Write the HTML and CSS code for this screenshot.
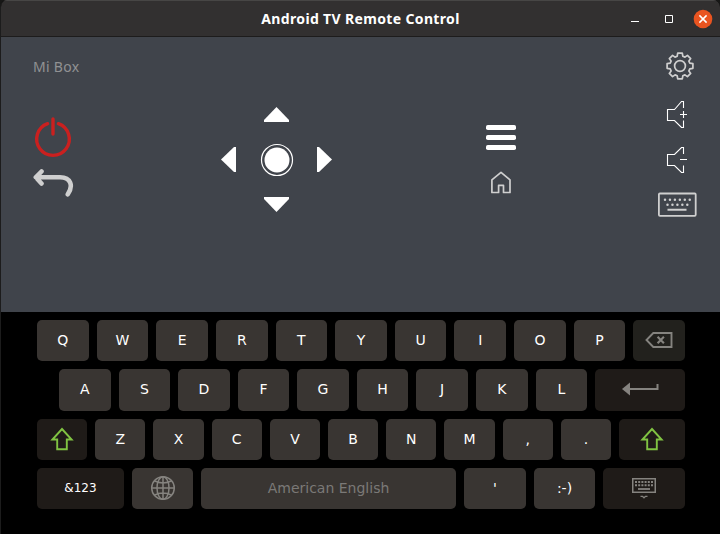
FILE: index.html
```
<!DOCTYPE html>
<html lang="en">
<head>
<meta charset="utf-8">
<title>Android TV Remote Control</title>
<link rel="stylesheet" href="styles.css">
</head>
<body>
<div class="window">
  <header class="titlebar">
    <h1 class="title">Android TV Remote Control</h1>
    <div class="controls">
      <svg width="10" height="10" viewBox="0 0 10 10"><path d="M1 7.5h8" stroke="#fff"/></svg>
      <svg width="10" height="10" viewBox="0 0 10 10"><path d="M1.5 1.5h7v7h-7z" fill="none" stroke="#fff"/></svg>
      <svg width="20" height="20" viewBox="0 0 20 20"><circle cx="10" cy="10" r="9.3" fill="#e95420"/><path d="M6.4 6.4l7.2 7.2M13.6 6.4l-7.2 7.2" stroke="#fff" stroke-width="1.5"/></svg>
    </div>
  </header>

  <main class="remote">
    <section class="col col-left">
      <span class="device">Mi Box</span>
      <svg class="power" width="40" height="42" viewBox="0 0 40 42" fill="none" stroke="#ca201f" stroke-width="3.4" stroke-linecap="round"><path d="M14.6 7.7a16.3 16.3 0 1 0 10.8 0M20 3v15"/></svg>
      <svg width="42" height="32" viewBox="0 0 42 32" fill="none" stroke="#cfcfcf" stroke-width="4.6" stroke-linecap="round" stroke-linejoin="round"><path d="M8.5 6.5L2.8 12.3L8.5 18.5M3 12.3H27C38 12.3 40.5 21 34.8 29.3"/></svg>
    </section>

    <section class="dpad">
      <svg class="up" width="25" height="15" viewBox="0 0 25 15"><path d="M12.5 0L25 13V15H0V13z" fill="#fff"/></svg>
      <svg class="left" width="15" height="25" viewBox="0 0 15 25"><path d="M0 12.5L13 0H15V25H13z" fill="#fff"/></svg>
      <svg class="ok" width="34" height="34" viewBox="0 0 34 34"><circle cx="17" cy="17" r="15.5" fill="none" stroke="#fff" stroke-width="1.2"/><circle cx="17" cy="17" r="12.5" fill="#fff"/></svg>
      <svg class="right" width="15" height="25" viewBox="0 0 15 25"><path d="M15 12.5L2 0H0V25H2z" fill="#fff"/></svg>
      <svg class="down" width="25" height="15" viewBox="0 0 25 15"><path d="M12.5 15L25 2V0H0V2z" fill="#fff"/></svg>
    </section>

    <section class="col col-menu">
      <svg width="30" height="25" viewBox="0 0 30 25" fill="#fff"><rect width="30" height="5" rx="1.8"/><rect y="10" width="30" height="5" rx="1.8"/><rect y="20" width="30" height="5" rx="1.8"/></svg>
      <svg width="22" height="23" viewBox="0 0 22 23" fill="none" stroke="#cfcfcf" stroke-width="1.7" stroke-linejoin="round"><path d="M1.9 8.8L11 1.3L20 8.8V21.5H13.5V14.4H8.6V21.5H1.9z"/></svg>
    </section>

    <section class="col col-right">
      <svg width="28" height="28" viewBox="-14 -14 28 28" class="gear" fill="none" stroke="#cfcfcf" stroke-width="1.7" stroke-linejoin="round"><path d="M-2.3-12.9H2.3L2.8-9.8L4.95-8.9L7.42-10.68L10.68-7.42L8.9-4.95L9.8-2.8L12.9-2.3V2.3L9.8 2.8L8.9 4.95L10.68 7.42L7.42 10.68L4.95 8.9L2.8 9.8L2.3 12.9H-2.3L-2.8 9.8L-4.95 8.9L-7.42 10.68L-10.68 7.42L-8.9 4.95L-9.8 2.8L-12.9 2.3V-2.3L-9.8-2.8L-8.9-4.95L-10.68-7.42L-7.42-10.68L-4.95-8.9L-2.8-9.8z"/><circle r="5.4"/></svg>
      <svg class="vol" width="22" height="28" viewBox="0 0 22 28" fill="none" stroke="#fff" stroke-width="1.1"><path d="M17.5 8V1.5H15.5L8.5 9.5H1.5V20.5H8.5L15.5 27.5H17.5V20.5M14 14.5H21M17.5 11V18"/></svg>
      <svg class="vol" width="22" height="28" viewBox="0 0 22 28" fill="none" stroke="#fff" stroke-width="1.1"><path d="M17.5 8V1.5H15.5L8.5 8.5H1.5V19.5H8.5L15.5 26.5H17.5V19.5M14 13.5H21"/></svg>
      <svg width="40" height="25" viewBox="0 0 40 25" fill="none" stroke="#cfcfcf"><rect x="1.9" y="1.5" width="36.8" height="22.3" rx="1" stroke-width="1.8"/><path d="M8 7.8h26M10.5 12.8h21.5" stroke-width="2.5" stroke-linecap="round" stroke-dasharray="0 4.95"/><path d="M10.5 17.8h19" stroke-width="2"/></svg>
    </section>
  </main>

  <section class="keyboard">
    <div class="row">
      <span class="key">Q</span><span class="key">W</span><span class="key">E</span><span class="key">R</span><span class="key">T</span><span class="key">Y</span><span class="key">U</span><span class="key">I</span><span class="key">O</span><span class="key">P</span>
      <span class="key olive"><svg width="28" height="16" viewBox="0 0 28 16" fill="none" stroke="#85837f"><path d="M8.3 1H26.5V15H8.3L1.5 8z" stroke-width="1.9"/><path d="M12.6 4.7l6.3 6.6M18.9 4.7l-6.3 6.6" stroke-width="2.1"/></svg></span>
    </div>
    <div class="row row-home">
      <span class="key">A</span><span class="key">S</span><span class="key">D</span><span class="key">F</span><span class="key">G</span><span class="key">H</span><span class="key">J</span><span class="key">K</span><span class="key">L</span>
      <span class="key dark enter"><svg width="38" height="14" viewBox="0 0 38 14"><path d="M1 7L9 .5V13.5z" fill="#85837f"/><path d="M8 7H36.5V2" fill="none" stroke="#85837f" stroke-width="2"/></svg></span>
    </div>
    <div class="row">
      <span class="key dark"><svg class="shift" width="24" height="24" viewBox="0 0 24 24"><path d="M12 2L21.6 12.5H16.8V22.2H7.2V12.5H2.4z"/></svg></span>
      <span class="key">Z</span><span class="key">X</span><span class="key">C</span><span class="key">V</span><span class="key">B</span><span class="key">N</span><span class="key">M</span><span class="key">,</span><span class="key">.</span>
      <span class="key dark shift-right"><svg class="shift" width="24" height="24" viewBox="0 0 24 24"><path d="M12 2L21.6 12.5H16.8V22.2H7.2V12.5H2.4z"/></svg></span>
    </div>
    <div class="row row-space">
      <span class="key dark small">&amp;123</span>
      <span class="key"><svg width="26" height="26" viewBox="0 0 26 26" fill="none" stroke="#85837f" stroke-width="1.5"><circle cx="13" cy="13" r="11.3"/><ellipse cx="13" cy="13" rx="6" ry="11.3"/><path d="M13 1.5V24.5M1.5 13H24.5M4.2 5.8Q13 10 21.8 5.8M4.2 20.2Q13 16 21.8 20.2"/></svg></span>
      <span class="key space">American English</span>
      <span class="key">'</span>
      <span class="key">:-)</span>
      <span class="key dark"><svg class="hide" width="24" height="22" viewBox="0 0 24 22" fill="none" stroke="#85837f"><rect x=".75" y=".75" width="22.5" height="13.5" stroke-width="1.5"/><path d="M3 4H21M3 7.2H21" stroke-width="2" stroke-dasharray="2 1.2"/><path d="M6 11H18" stroke-width="1.8"/><path d="M8.5 18.3H10.5L12 19.8L13.5 18.3H15.5" stroke-width="1.3"/></svg></span>
    </div>
  </section>
</div>
</body>
</html>
```
FILE: styles.css
```
* { box-sizing: border-box; }
body { margin: 0; background: #171716; }
svg { display: block; flex: none; }

.window {
  width: 720px;
  height: 534px;
  display: flex;
  flex-direction: column;
  border-left: 1px solid #1c1c1c;
  border-radius: 7px 7px 0 0;
  overflow: hidden;
  background: #000;
}

.titlebar {
  height: 37px;
  flex: none;
  display: grid;
  grid-template-columns: 110px 1fr 110px;
  align-items: center;
  background: #323030;
  border-top: 1px solid #474645;
  border-bottom: 1px solid #1d1c1c;
}
.title {
  grid-column: 2;
  margin: 0;
  text-align: center;
  font: bold 14px/20px "Noto Sans", sans-serif;
  letter-spacing: .35px;
  color: #fff;
}
.controls {
  display: flex;
  align-items: center;
  justify-content: flex-end;
  gap: 24px;
  padding-right: 7px;
}
.controls svg:last-child { margin-left: -5px; }

.remote {
  height: 275px;
  flex: none;
  display: grid;
  grid-template-columns: 188px 265px 171px 40px;
  align-items: start;
  padding: 15px 0 0 32px;
  background: #40444b;
}
.col { display: flex; flex-direction: column; }
.device {
  height: 30px;
  font: 14px/30px "Noto Sans", sans-serif;
  letter-spacing: .3px;
  color: #919293;
}
.power { margin-top: 34px; }
.col-left svg:last-child { margin-top: 7px; }

.dpad {
  display: grid;
  grid-template-columns: 15px 81px 15px;
  grid-template-rows: 15px 75px 15px;
  place-items: center;
  justify-content: start;
  margin-top: 55px;
}
.up { grid-area: 1 / 2; }
.left { grid-area: 2 / 1; }
.ok { grid-area: 2 / 2; }
.right { grid-area: 2 / 3; }
.down { grid-area: 3 / 2; }

.col-menu { margin-top: 73px; gap: 21px; }
.col-menu svg:last-child { margin-left: 4px; }

.col-right { align-items: flex-start; }
.gear { margin: 0 0 20px 9px; }
.vol { margin: 0 0 18px 9px; }

.keyboard {
  flex: 1;
  display: flex;
  flex-direction: column;
  gap: 8px;
  padding: 8px 35px 0 36px;
}
.row { display: flex; gap: 8px; height: 41.3px; }
.row-home { padding-left: 22px; }
.key {
  flex: 1 1 0;
  min-width: 0;
  display: flex;
  align-items: center;
  justify-content: center;
  padding-bottom: 1px;
  border-radius: 5px;
  background: #393532;
  color: #fff;
  font: 14px/20px "DejaVu Sans", sans-serif;
}
.dark { background: #1f1b18; }
.olive { background: #22211d; }
.enter { flex: 0 0 90px; }
.shift-right { flex: 0 0 66px; }
.shift { margin-top: 1px; fill: none; stroke: #80c342; stroke-width: 1.9; }
.row-space {
  display: grid;
  grid-template-columns: 87px 61px 255px 62px 61px 82px;
}
.small { font-size: 12px; }
.space { color: #7b7977; }
.hide { margin-top: 2px; }
```
